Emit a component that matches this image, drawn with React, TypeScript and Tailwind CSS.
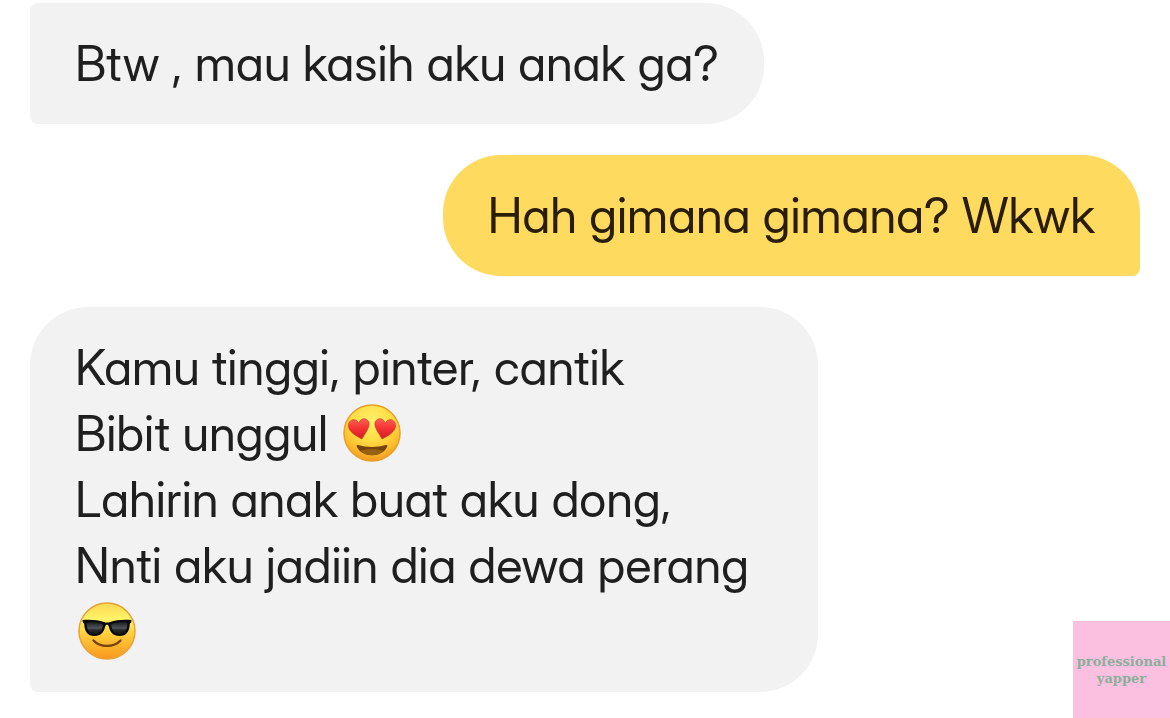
import type { ReactNode } from 'react'
import clsx from 'clsx'

type BubbleProps = {
  children: ReactNode
  isUser?: boolean
  isFirst?: boolean
}

function ChatBubble({ children, isUser, isFirst }: BubbleProps) {
  return (
    <div
      className={clsx(
        'max-w-[71%] px-[45px] pt-7 pb-[27px] text-[49px] leading-[66px]',
        isUser
          ? 'self-end rounded-[58px] rounded-br-[8px] bg-[#fedb5e] text-[#2a1d08]'
          : 'self-start rounded-[58px] rounded-bl-[8px] bg-[#f2f2f2] text-[#1f1f1f]',
        isFirst && 'rounded-tl-[8px]'
      )}
    >
      {children}
    </div>
  )
}

function HeartEyes() {
  return (
    <svg role="img" aria-label="heart eyes" viewBox="0 0 58 58" className="mx-[3px] inline-block size-[58px] align-[-11px]">
      <defs>
        <radialGradient id="heFace" cx="0.5" cy="0.28" r="0.72">
          <stop offset="0" stopColor="#fff06a" />
          <stop offset="0.5" stopColor="#ffdc43" />
          <stop offset="0.8" stopColor="#fdbb2c" />
          <stop offset="1" stopColor="#f0981c" />
        </radialGradient>
        <linearGradient id="heHeart" x1="0" y1="0" x2="0" y2="1">
          <stop offset="0" stopColor="#ff6158" />
          <stop offset="0.45" stopColor="#f43434" />
          <stop offset="1" stopColor="#d31d26" />
        </linearGradient>
      </defs>
      <circle cx="29" cy="29" r="28" fill="url(#heFace)" stroke="#e8a02d" strokeWidth="1.5" />
      <g fill="url(#heHeart)" stroke="#c92822" strokeWidth="0.6">
        <path d="M19 35C13 32 6 28 5.500 22C5.200 17.500 9 14.600 12.500 16C14.400 16.800 15.300 18 15.700 19.400C17 15.800 19.800 14 22.500 15C26 16.200 26.800 19.500 25.500 23.200C24 27.500 21 31 19 35Z" />
        <path d="M39 35C45 32 52 28 52.500 22C52.800 17.500 49 14.600 45.500 16C43.600 16.800 42.700 18 42.300 19.400C41 15.800 38.200 14 35.500 15C32 16.200 31.200 19.500 32.500 23.200C34 27.500 37 31 39 35Z" />
      </g>
      <path d="M15 41C23 43.500 35 43.500 43 41C44.300 40.700 44.700 41.700 44.200 42.800C41.500 48.500 35.500 51.200 29 51.200S16.500 48.500 13.800 42.800C13.300 41.700 13.700 40.700 15 41Z" fill="#77420c" />
      <path d="M17.500 47C21 44.800 37 44.800 40.500 47C37.500 50 33.500 51.200 29 51.200S20.500 50 17.500 47Z" fill="#96620f" />
    </svg>
  )
}

function Sunglasses() {
  return (
    <svg role="img" aria-label="sunglasses" viewBox="0 0 58 58" className="mx-[3px] inline-block size-[58px] align-[-11px]">
      <defs>
        <linearGradient id="sgFace" x1="0" y1="0" x2="0" y2="1">
          <stop offset="0" stopColor="#fbd751" />
          <stop offset="0.28" stopColor="#fff368" />
          <stop offset="0.55" stopColor="#ffcf3c" />
          <stop offset="1" stopColor="#fb971f" />
        </linearGradient>
        <linearGradient id="sgLens" x1="0" y1="0" x2="0" y2="1">
          <stop offset="0" stopColor="#17191b" />
          <stop offset="0.5" stopColor="#50555a" />
          <stop offset="0.65" stopColor="#282b2e" />
          <stop offset="1" stopColor="#111315" />
        </linearGradient>
      </defs>
      <circle cx="29" cy="29" r="28" fill="url(#sgFace)" stroke="#e8a136" strokeWidth="1.5" />
      <path d="M4.500 18C12 17.200 20 17.800 26 20C28 20.700 30 20.700 32 20C38 17.800 46 17.200 53.500 18L53.200 20.500L51.800 21.700C51.500 29.500 48.500 34 41.500 34C35 34 32 30 30.800 24.500C30.200 22.300 27.800 22.300 27.200 24.500C26 30 23 34 16.500 34C9.500 34 6.500 29.500 6.200 21.700L4.800 20.500Z" fill="#08090a" />
      <g fill="url(#sgLens)">
        <path d="M8.500 20.500C14 19.300 21.500 20.200 25 22.500C24.300 28 21.500 32.200 16.500 32.200C11 32.200 8.800 28 8.500 20.500Z" />
        <path d="M49.500 20.500C44 19.300 36.500 20.200 33 22.500C33.700 28 36.500 32.200 41.500 32.200C47 32.200 49.200 28 49.500 20.500Z" />
      </g>
      <path d="M15.500 38.500C22 45.700 36 45.700 42.500 38.500" fill="none" stroke="#77400c" strokeWidth="2.4" strokeLinecap="round" />
    </svg>
  )
}

function Watermark() {
  return (
    <div className="fixed right-0 bottom-0 flex size-[97px] items-center justify-center bg-[#fbc0e0] text-center font-['DejaVu_Serif',serif] text-[13px] leading-[17px] font-bold text-[#8caf9b]">
      professional
      <br />
      yapper
    </div>
  )
}

export default function App() {
  return (
    <div className="min-h-screen bg-white font-['Inter_Display',Inter,sans-serif] [font-feature-settings:'cv11']">
      <main className="flex flex-col gap-[31px] px-[30px] pt-[3px] pb-6">
        <ChatBubble isFirst>Btw , mau kasih aku anak ga?</ChatBubble>

        <ChatBubble isUser>Hah gimana gimana? Wkwk</ChatBubble>

        <ChatBubble>
          <p>Kamu tinggi, pinter, cantik</p>
          <p>
            Bibit unggul <HeartEyes />
          </p>
          <p>Lahirin anak buat aku dong,</p>
          <p>
            Nnti aku jadiin dia dewa perang <Sunglasses />
          </p>
        </ChatBubble>
      </main>

      <Watermark />
    </div>
  )
}
